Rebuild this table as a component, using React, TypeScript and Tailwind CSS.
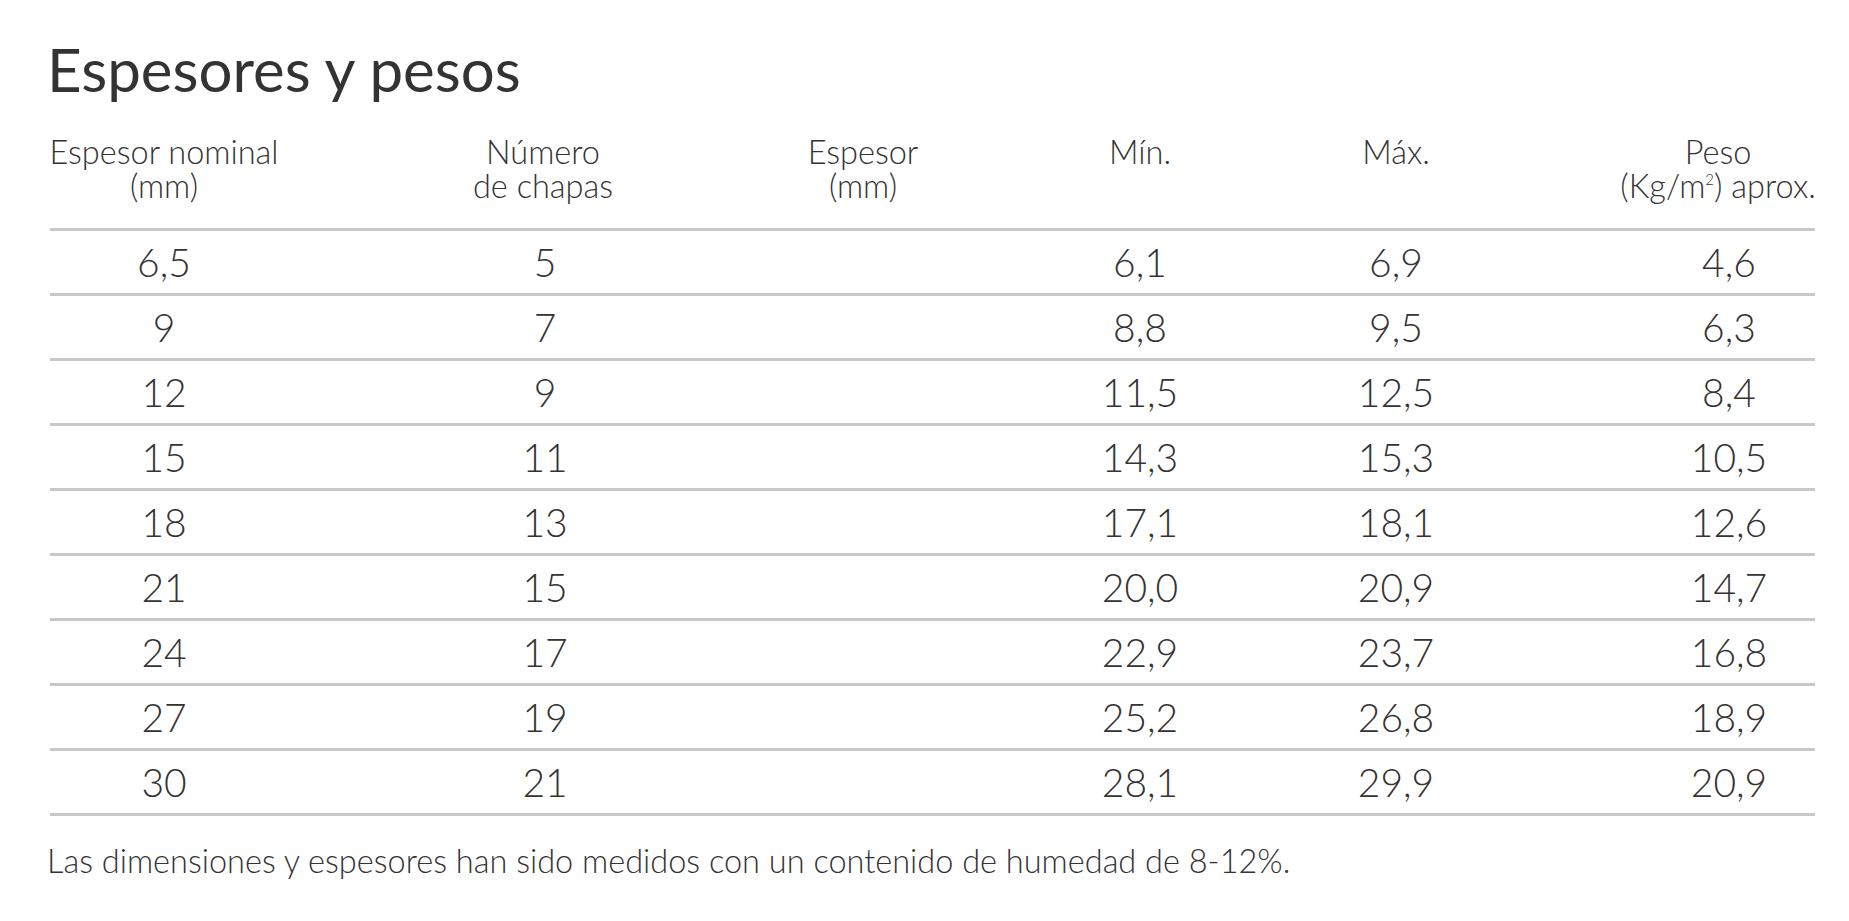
const cols = [
  "w-[228px]",
  "ml-[167px] w-[200px]",
  "ml-[120px] w-[200px]",
  "ml-[75px] w-[200px]",
  "ml-[56px] w-[200px]",
  "ml-[147px] w-[172px]",
]

const headers: React.ReactNode[][] = [
  ["Espesor nominal", "(mm)"],
  ["Número", "de chapas"],
  ["Espesor", "(mm)"],
  ["Mín."],
  ["Máx."],
  [
    "Peso",
    <>
      (Kg/m<sup className="text-[15px] -top-[13px]">2</sup>) aprox.
    </>,
  ],
]

// small nudges so the header labels sit where the original ones do
const headerNudge = ["", "pr-[4px]", "pr-[4px]", "", "", "pr-[22px]"]

const rows = [
  ["6,5", "5", "", "6,1", "6,9", "4,6"],
  ["9", "7", "", "8,8", "9,5", "6,3"],
  ["12", "9", "", "11,5", "12,5", "8,4"],
  ["15", "11", "", "14,3", "15,3", "10,5"],
  ["18", "13", "", "17,1", "18,1", "12,6"],
  ["21", "15", "", "20,0", "20,9", "14,7"],
  ["24", "17", "", "22,9", "23,7", "16,8"],
  ["27", "19", "", "25,2", "26,8", "18,9"],
  ["30", "21", "", "28,1", "29,9", "20,9"],
]

export default function App() {
  return (
    <div className="min-h-screen bg-white text-[#333333] font-['Lato','Noto_Sans',sans-serif] pl-[47px] pt-[39px]">
      <h1 className="text-[60px] leading-none font-normal">Espesores y pesos</h1>

      <div className="ml-[3px] w-[1765px] mt-[36px]">
        <div className="flex border-b-[3px] border-[#c8c8c8] pb-[25px] text-[32.5px] leading-[34px] font-light">
          {headers.map((lines, j) => (
            <div
              key={j}
              className={`${cols[j]} ${headerNudge[j]} shrink-0 flex flex-col items-center whitespace-nowrap`}
            >
              {lines.map((line, k) => (
                <span key={k}>{line}</span>
              ))}
            </div>
          ))}
        </div>

        {rows.map((row, i) => (
          <div
            key={i}
            className="flex items-center h-[65px] border-b-[3px] border-[#c8c8c8] text-[39px] font-light"
          >
            {row.map((cell, j) => (
              <div key={j} className={`${cols[j]} shrink-0 text-center`}>
                {cell}
              </div>
            ))}
          </div>
        ))}
      </div>

      <p className="mt-[28px] text-[32.5px] leading-[34px] font-light">
        Las dimensiones y espesores han sido medidos con un contenido de humedad de 8-12%.
      </p>
    </div>
  )
}
